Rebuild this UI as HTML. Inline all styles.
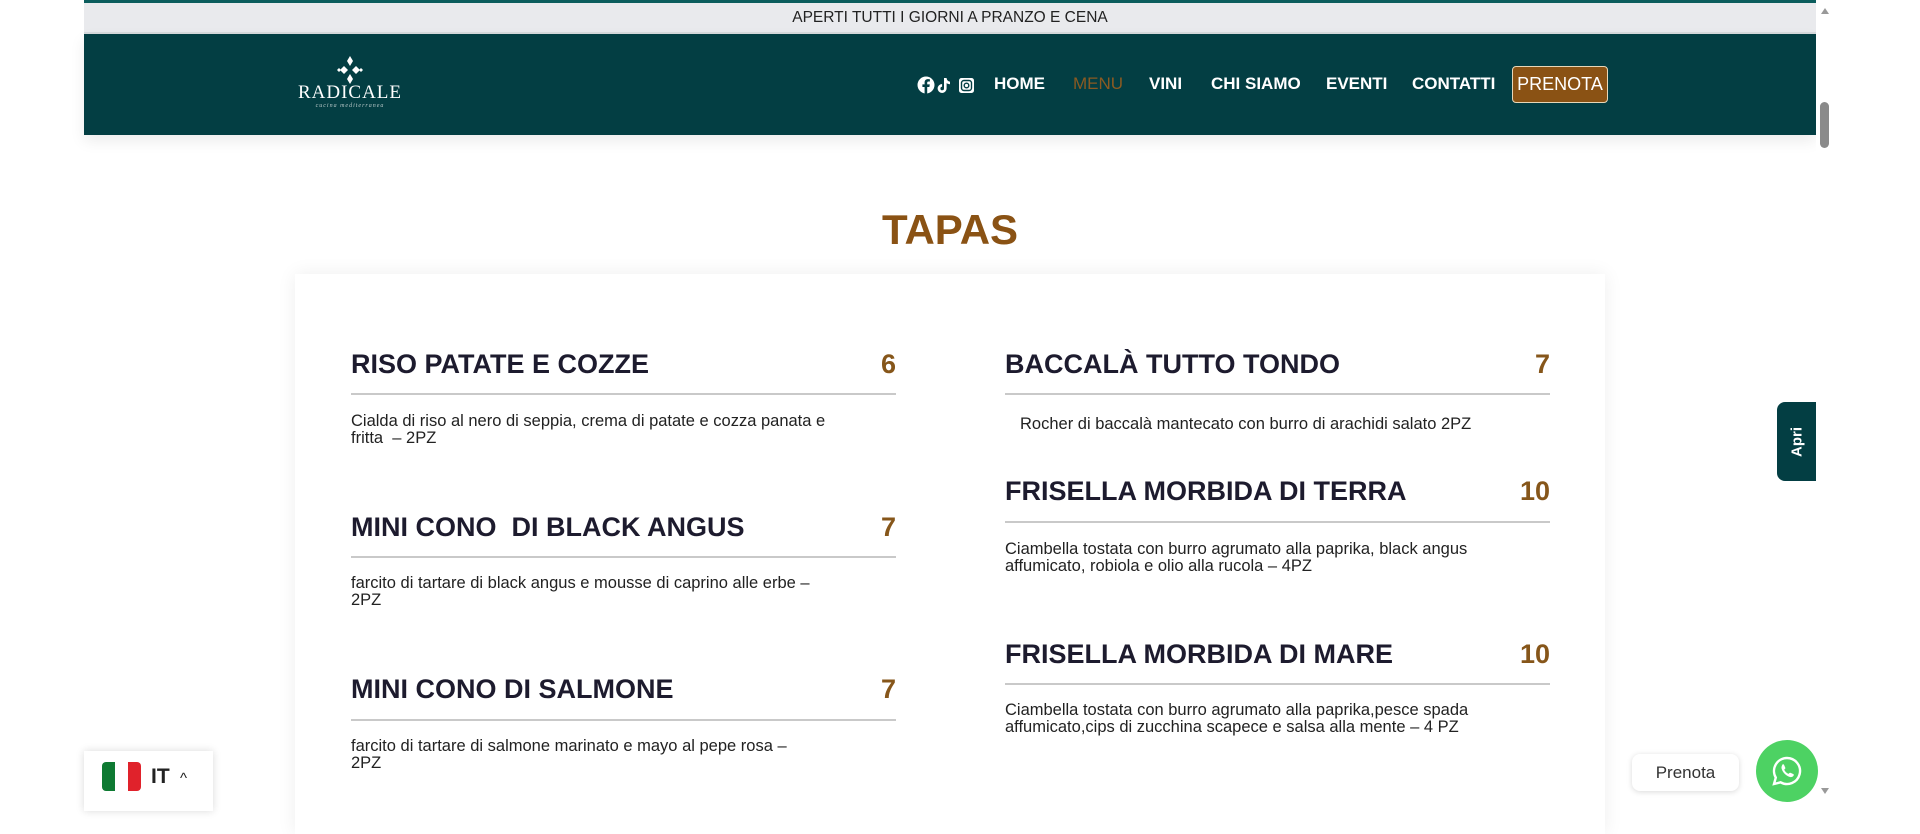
<!DOCTYPE html>
<html><head><meta charset="utf-8"><style>
*{margin:0;padding:0;box-sizing:border-box}
body{width:1920px;height:800px;overflow:hidden;background:#fff;font-family:"Liberation Sans",sans-serif;position:relative}
.a{position:absolute}
.topline{left:84px;top:0;width:1732px;height:3px;background:#0b5d5d}
.topbar{left:84px;top:3px;width:1732px;height:31px;background:#e9eaed;font-size:15.5px;color:#222;text-align:center;line-height:30px;border-bottom:2px solid #d6dadd}
.header{left:84px;top:34px;width:1732px;height:101px;background:#033e43;box-shadow:0 6px 14px rgba(0,0,0,.08)}
.nav{top:74px;font-size:17px;font-weight:bold;color:#fff;line-height:20px}
.pren{left:1512px;top:66px;width:96px;height:37px;background:#8a5214;border:1px solid #e8d7b8;border-radius:4px;color:#fff;font-size:18px;line-height:35px;text-align:center}
.tapas{left:0;width:1900px;top:207px;text-align:center;font-weight:bold;font-size:42px;color:#8a5214;line-height:46px}
.card{left:295px;top:274px;width:1310px;height:560px;background:#fff;box-shadow:0 0 18px rgba(0,0,0,.07)}
.t{font-size:27px;font-weight:bold;color:#1d1b2e;line-height:30px;white-space:nowrap}
.p{font-size:27px;color:#86561a;line-height:30px;text-align:right;font-weight:bold}
.ln{height:2px;background:#c9c9c9}
.d{font-size:16.5px;line-height:16.5px;color:#222;white-space:nowrap}
.apri{left:1777px;top:402px;width:39px;height:79px;background:#033e43;border-radius:8px 0 0 8px}
.apri span{position:absolute;left:50%;top:50%;transform:translate(-50%,-50%) rotate(-90deg);color:#fff;font-weight:bold;font-size:15px}
</style></head><body>
<div class="a topline"></div>
<div class="a topbar">APERTI TUTTI I GIORNI A PRANZO E CENA</div>
<div class="a header"></div>
<svg class="a" style="left:334px;top:56px" width="32" height="28" viewBox="0 0 32 28">
<g fill="#fff"><path d="M16 0 L19 5 L16 10 L13 5Z"/><path d="M16 18 L19 23 L16 28 L13 23Z"/><path d="M6 14 L10 10 L14 14 L10 18Z"/><path d="M18 14 L22 10 L26 14 L22 18Z"/><path d="M3 14 L5 12 L7 14 L5 16Z"/><path d="M25 14 L27 12 L29 14 L27 16Z"/></g></svg>
<div class="a" style="left:290px;top:82px;width:120px;text-align:center;color:#fff;font-family:'Liberation Serif',serif;font-size:19px;letter-spacing:1px">RADICALE</div>
<div class="a" style="left:310px;top:103px;width:80px;text-align:center;color:#b8c8c8;font-family:'Liberation Serif',serif;font-style:italic;font-size:6px;letter-spacing:1px">cucina mediterranea</div>
<svg class="a" style="left:917px;top:76px" width="60" height="18" viewBox="0 0 60 18">
<circle cx="9" cy="9" r="8.5" fill="#fff"/><path d="M10.2 17.5V11h2.2l.4-2.6h-2.6V6.8c0-.8.3-1.3 1.4-1.3h1.3V3.2c-.3 0-1.1-.1-2-.1-2 0-3.3 1.2-3.3 3.4v1.9H5.4V11h2.2v6.5z" fill="#033e43"/>
<path d="M27 2h2.6c.2 2 1.4 3.4 3.4 3.6v2.6c-1.3 0-2.4-.4-3.4-1.1v5.4a4.5 4.5 0 1 1-4.5-4.5v2.7a1.8 1.8 0 1 0 1.9 1.8z" fill="#fff"/>
<rect x="42" y="2" width="15" height="15" rx="2.5" fill="#fff"/><rect x="44.5" y="4.5" width="10" height="10" rx="2.5" fill="none" stroke="#033e43" stroke-width="1.4"/><circle cx="49.5" cy="9.5" r="2.3" fill="none" stroke="#033e43" stroke-width="1.4"/>
</svg>
<div class="a nav" style="left:994px">HOME</div>
<div class="a nav" style="left:1073px;color:#8a5a22;font-weight:normal">MENU</div>
<div class="a nav" style="left:1149px">VINI</div>
<div class="a nav" style="left:1211px">CHI SIAMO</div>
<div class="a nav" style="left:1326px">EVENTI</div>
<div class="a nav" style="left:1412px">CONTATTI</div>
<div class="a pren">PRENOTA</div>
<div class="a" style="left:1816px;top:0;width:17px;height:800px;background:#fff"></div>
<div class="a" style="left:1821px;top:8px;width:0;height:0;border-left:4px solid transparent;border-right:4px solid transparent;border-bottom:6px solid #999"></div>
<div class="a" style="left:1820px;top:102px;width:9px;height:46px;background:#8a8a8a;border-radius:5px"></div>
<div class="a" style="left:1821px;top:788px;width:0;height:0;border-left:4px solid transparent;border-right:4px solid transparent;border-top:6px solid #999"></div>

<div class="a tapas">TAPAS</div>
<div class="a card"></div>

<div class="a t" style="left:351px;top:349px">RISO PATATE E COZZE</div>
<div class="a p" style="left:796px;top:349px;width:100px">6</div>
<div class="a ln" style="left:351px;top:393px;width:545px"></div>
<div class="a d" style="left:351px;top:413px">Cialda di riso al nero di seppia, crema di patate e cozza panata e<br>fritta&nbsp; – 2PZ</div>

<div class="a t" style="left:351px;top:512px">MINI CONO&nbsp; DI BLACK ANGUS</div>
<div class="a p" style="left:796px;top:512px;width:100px">7</div>
<div class="a ln" style="left:351px;top:556px;width:545px"></div>
<div class="a d" style="left:351px;top:575px">farcito di tartare di black angus e mousse di caprino alle erbe –<br>2PZ</div>

<div class="a t" style="left:351px;top:674px">MINI CONO DI SALMONE</div>
<div class="a p" style="left:796px;top:674px;width:100px">7</div>
<div class="a ln" style="left:351px;top:719px;width:545px"></div>
<div class="a d" style="left:351px;top:738px">farcito di tartare di salmone marinato e mayo al pepe rosa –<br>2PZ</div>

<div class="a t" style="left:1005px;top:349px">BACCALÀ TUTTO TONDO</div>
<div class="a p" style="left:1450px;top:349px;width:100px">7</div>
<div class="a ln" style="left:1005px;top:393px;width:545px"></div>
<div class="a d" style="left:1020px;top:416px">Rocher di baccalà mantecato con burro di arachidi salato 2PZ</div>

<div class="a t" style="left:1005px;top:476px">FRISELLA MORBIDA DI TERRA</div>
<div class="a p" style="left:1450px;top:476px;width:100px">10</div>
<div class="a ln" style="left:1005px;top:521px;width:545px"></div>
<div class="a d" style="left:1005px;top:541px">Ciambella tostata con burro agrumato alla paprika, black angus<br>affumicato, robiola e olio alla rucola – 4PZ</div>

<div class="a t" style="left:1005px;top:639px">FRISELLA MORBIDA DI MARE</div>
<div class="a p" style="left:1450px;top:639px;width:100px">10</div>
<div class="a ln" style="left:1005px;top:683px;width:545px"></div>
<div class="a d" style="left:1005px;top:702px">Ciambella tostata con burro agrumato alla paprika,pesce spada<br>affumicato,cips di zucchina scapece e salsa alla mente – 4 PZ</div>

<div class="a apri"><span>Apri</span></div>

<div class="a" style="left:84px;top:751px;width:129px;height:60px;background:#fff;box-shadow:0 0 8px rgba(0,0,0,.15)"></div>
<div class="a" style="left:102px;top:762px;width:39px;height:29px;border-radius:4px;overflow:hidden;display:flex"><div style="flex:1;background:#0e7a32"></div><div style="flex:1;background:#fff"></div><div style="flex:1;background:#e0222b"></div></div>
<div class="a" style="left:151px;top:765px;font-size:21px;font-weight:bold;color:#222">IT</div>
<div class="a" style="left:180px;top:770px;font-size:15px;color:#222">^</div>

<div class="a" style="left:1632px;top:754px;width:107px;height:37px;background:#fff;border-radius:8px;box-shadow:0 1px 6px rgba(0,0,0,.15);font-size:17px;color:#333;line-height:37px;text-align:center">Prenota</div>
<div class="a" style="left:1756px;top:740px;width:62px;height:62px;border-radius:50%;background:#4dd263"></div>
<svg class="a" style="left:1771px;top:755px" width="32" height="32" viewBox="0 0 32 32"><path d="M16 3a13 13 0 0 0-11.2 19.6L3 29l6.6-1.7A13 13 0 1 0 16 3z" fill="none" stroke="#fff" stroke-width="2.4"/><path d="M11.5 9.5c.4-.3 1.2-.3 1.5.2l1.3 3c.2.4 0 .8-.3 1.1l-.8.9c.9 1.8 2.4 3.3 4.2 4.2l.9-.8c.3-.3.7-.4 1.1-.3l3 1.3c.5.3.5 1.1.2 1.5-.8 1.2-2.2 1.8-3.6 1.4-4-1.2-7.2-4.4-8.4-8.4-.4-1.4.2-2.8.9-4.1z" fill="#fff"/></svg>
</body></html>
